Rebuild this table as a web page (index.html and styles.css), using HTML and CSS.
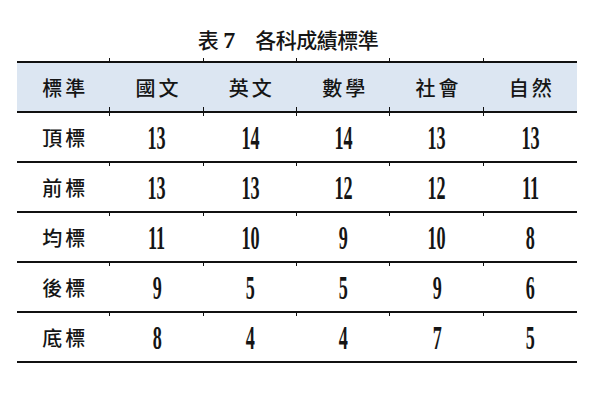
FILE: index.html
```html
<!DOCTYPE html>
<html lang="zh-Hant">
<head>
<meta charset="utf-8">
<link rel="stylesheet" href="styles.css">
</head>
<body>
<div class="page">
  <div class="title">表<span class="tnum">7</span>　各科成績標準</div>
  <table class="grid">
    <thead>
      <tr>
        <th>標準</th><th>國文</th><th>英文</th><th>數學</th><th>社會</th><th>自然</th>
      </tr>
    </thead>
    <tbody>
      <tr><td class="lab">頂標</td><td><span class="n">13</span></td><td><span class="n">14</span></td><td><span class="n">14</span></td><td><span class="n">13</span></td><td><span class="n">13</span></td></tr>
      <tr><td class="lab">前標</td><td><span class="n">13</span></td><td><span class="n">13</span></td><td><span class="n">12</span></td><td><span class="n">12</span></td><td><span class="n">11</span></td></tr>
      <tr><td class="lab">均標</td><td><span class="n">11</span></td><td><span class="n">10</span></td><td><span class="n">9</span></td><td><span class="n">10</span></td><td><span class="n">8</span></td></tr>
      <tr><td class="lab">後標</td><td><span class="n">9</span></td><td><span class="n">5</span></td><td><span class="n">5</span></td><td><span class="n">9</span></td><td><span class="n">6</span></td></tr>
      <tr><td class="lab">底標</td><td><span class="n">8</span></td><td><span class="n">4</span></td><td><span class="n">4</span></td><td><span class="n">7</span></td><td><span class="n">5</span></td></tr>
    </tbody>
  </table>
</div>
</body>
</html>
```
FILE: styles.css
```css
html, body {
  margin: 0;
  padding: 0;
  background: #ffffff;
}
.page {
  width: 600px;
  height: 400px;
  overflow: hidden;
  font-family: "Noto Sans CJK TC", "Noto Sans CJK SC", sans-serif;
  color: #151515;
}
.title {
  height: 61px;
  box-sizing: border-box;
  padding: 26px 24px 0 0;
  text-align: center;
  font-size: 21px;
  font-weight: 500;
  line-height: 26px;
  letter-spacing: -0.5px;
}
.tnum {
  font-family: "Liberation Serif", serif;
  font-size: 24px;
  font-weight: bold;
  padding: 0 0 0 5px;
}
.grid {
  margin-left: 17px;
  width: 560px;
  border-collapse: collapse;
  table-layout: fixed;
}
.grid th,
.grid td {
  position: relative;
  height: 48px;
  padding: 0;
  text-align: center;
  vertical-align: middle;
  border-top: 2px solid #111;
  border-bottom: 2px solid #111;
}
.grid th {
  background: #dce6f2;
  font-weight: 500;
  font-size: 20px;
  letter-spacing: 3px;
  padding-left: 3px;
}
.grid td.lab {
  font-size: 20px;
  font-weight: 500;
  letter-spacing: 3px;
  padding-left: 3px;
}
.grid th + th::before {
  content: "";
  position: absolute;
  left: -1px;
  top: -5px;
  width: 1px;
  height: 4px;
  background: #111;
}
.grid th + th::after {
  content: "";
  position: absolute;
  left: -1px;
  bottom: 0;
  width: 1px;
  height: 4px;
  background: #111;
}
.grid td + td::before {
  content: "";
  position: absolute;
  left: -1px;
  top: 0;
  width: 1px;
  height: 3px;
  background: #111;
}
.n {
  display: inline-block;
  font-family: "Liberation Serif", serif;
  font-size: 33px;
  font-weight: bold;
  line-height: 34px;
  transform: scaleX(0.55);
  position: relative;
  top: 1px;
}
```
